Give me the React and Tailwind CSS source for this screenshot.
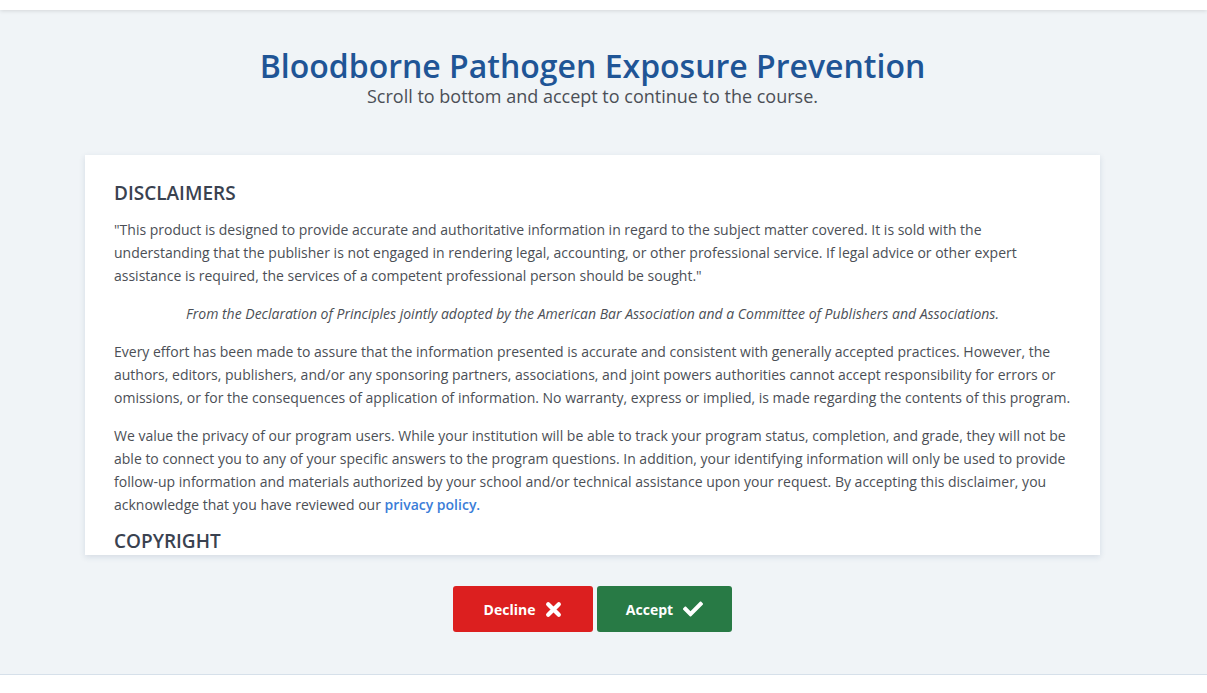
import { FaCheck } from 'react-icons/fa';

const para = 'mb-[15px] text-[14px] leading-[23px] text-[#4b4f56]';

function CrossIcon() {
  return (
    <svg viewBox="0 0 16 16" className="h-[17px] w-[17px]" fill="none" stroke="currentColor" strokeWidth="4" strokeLinecap="round">
      <path d="M3 3l10 10M13 3L3 13" />
    </svg>
  );
}

export default function App() {
  return (
    <div className="flex min-h-[693px] flex-col bg-white font-['Open_Sans',sans-serif]">
      <div className="relative z-10 h-[10px] bg-white shadow-[0_1px_4px_rgba(0,0,0,0.12)]" />
      <main className="h-[665px] border-b border-[#d6e0ea] bg-[#f0f4f7]">
        <div className="flex w-[1185px] flex-col items-center">
          <h1 className="mt-[37px] text-[32px] font-semibold leading-[37px] text-[#1f5596]">Bloodborne Pathogen Exposure Prevention</h1>
          <p className="text-[18px] leading-[24px] text-[#4b4f56]">Scroll to bottom and accept to continue to the course.</p>

          <section className="mt-[47px] h-[400px] w-[1015px] overflow-hidden bg-white px-[29px] pt-[25px] shadow-[0_2px_6px_rgba(40,70,110,0.14)]">
            <h2 className="mb-3 text-[19px] font-semibold leading-[26px] text-[#3a4250]">DISCLAIMERS</h2>
            <p className={para}>
              "This product is designed to provide accurate and authoritative information in regard to the subject matter covered. It is sold with the understanding that the publisher is not engaged in rendering legal, accounting, or other professional service. If legal advice or other expert assistance is required, the services of a competent professional person should be sought."
            </p>
            <p className={para + ' text-center italic'}>
              From the Declaration of Principles jointly adopted by the American Bar Association and a Committee of Publishers and Associations.
            </p>
            <p className={para}>
              Every effort has been made to assure that the information presented is accurate and consistent with generally accepted practices. However, the authors, editors, publishers, and/or any sponsoring partners, associations, and joint powers authorities cannot accept responsibility for errors or omissions, or for the consequences of application of information. No warranty, express or implied, is made regarding the contents of this program.
            </p>
            <p className="text-[14px] leading-[23px] text-[#4b4f56]">
              We value the privacy of our program users. While your institution will be able to track your program status, completion, and grade, they will not be able to connect you to any of your specific answers to the program questions. In addition, your identifying information will only be used to provide follow-up information and materials authorized by your school and/or technical assistance upon your request. By accepting this disclaimer, you acknowledge that you have reviewed our <a className="font-semibold text-[#3b7dd8]">privacy policy.</a>
            </p>
            <h2 className="mt-3 text-[19px] font-semibold leading-[26px] text-[#3a4250]">COPYRIGHT</h2>
          </section>

          <div className="mt-[31px] flex gap-1">
            <button className="flex h-[46px] w-[140px] items-center justify-center gap-[10px] rounded-[3px] bg-[#dc1f1f] text-[14px] font-bold text-white">
              Decline <CrossIcon />
            </button>
            <button className="flex h-[46px] w-[135px] items-center justify-center gap-[10px] rounded-[3px] bg-[#287a45] text-[14px] font-bold text-white">
              Accept <FaCheck className="h-[20px] w-[20px]" />
            </button>
          </div>
        </div>
      </main>
    </div>
  );
}
